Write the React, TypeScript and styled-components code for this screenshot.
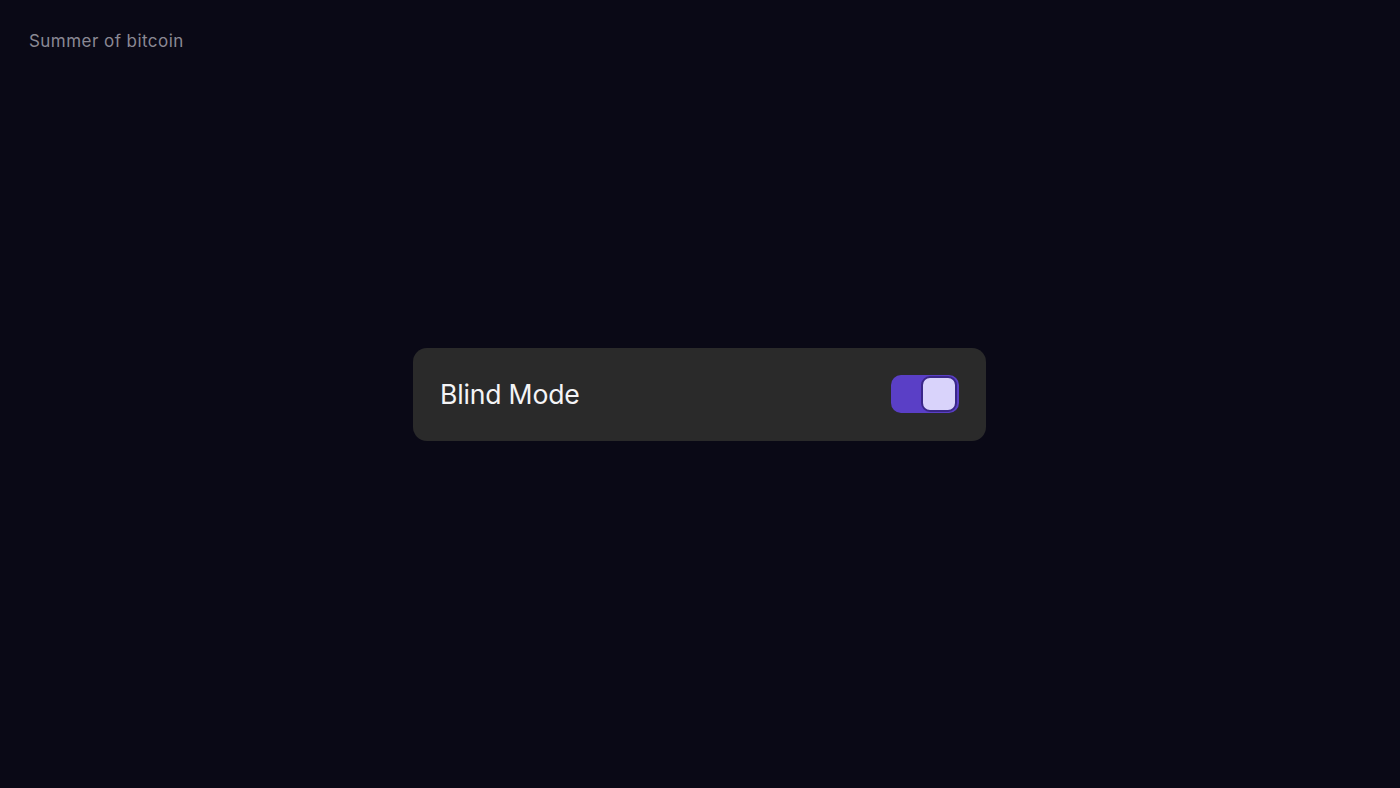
import { useState } from "react";
import styled, { createGlobalStyle } from "styled-components";

const GlobalStyle = createGlobalStyle`
  html, body {
    margin: 0;
    padding: 0;
    background: #0a0916;
  }
  * {
    box-sizing: border-box;
  }
`;

const Page = styled.div`
  height: 788px;
  display: grid;
  grid-template-rows: 1fr auto 1fr;
  justify-items: center;
  background: #0a0916;
  font-family: Inter, "Noto Sans", sans-serif;
`;

const Header = styled.header`
  justify-self: start;
  align-self: start;
  padding: 31px 29px;
  font-size: 17px;
  letter-spacing: 0.45px;
  color: #8a8894;
`;

const Card = styled.div`
  width: 573px;
  height: 93px;
  margin-right: 1px;
  padding: 0 27px 0 27px;
  display: flex;
  align-items: center;
  justify-content: space-between;
  border-radius: 14px;
  background: #2a2a2a;
`;

const Label = styled.span`
  font-size: 26.6px;
  color: #f4f4f6;
  letter-spacing: -0.2px;
`;

const Track = styled.button<{ $on: boolean }>`
  width: 68px;
  height: 38px;
  padding: 1px 2px;
  border: none;
  border-radius: 10px;
  display: flex;
  align-items: center;
  justify-content: ${(p) => (p.$on ? "flex-end" : "flex-start")};
  background: ${(p) => (p.$on ? "#5a3fc6" : "#555")};
  cursor: pointer;
`;

const Knob = styled.span`
  width: 36px;
  height: 36px;
  border-radius: 9px;
  border: 2px solid #3a2788;
  background: #d9d3fb;
`;

export default function App() {
  const [on, setOn] = useState(true);
  return (
    <>
      <GlobalStyle />
      <Page>
        <Header>Summer of bitcoin</Header>
        <Card>
          <Label>Blind Mode</Label>
          <Track $on={on} onClick={() => setOn(!on)} aria-pressed={on}>
            <Knob />
          </Track>
        </Card>
      </Page>
    </>
  );
}
